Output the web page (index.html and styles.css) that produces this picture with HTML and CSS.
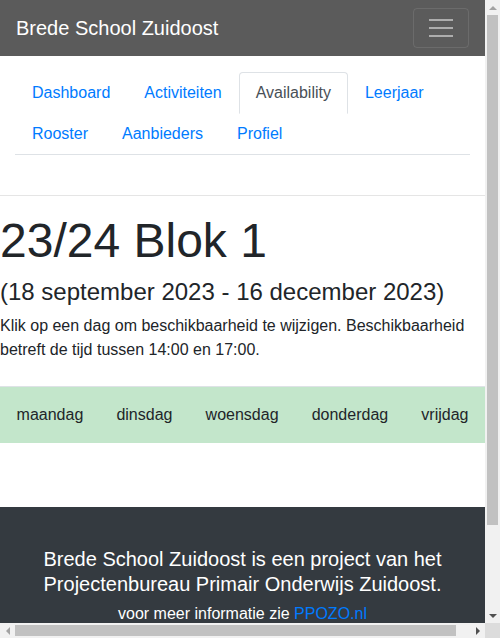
FILE: index.html
```html
<!DOCTYPE html>
<html lang="nl">
<head>
<meta charset="utf-8">
<title>Availability - Brede School Zuidoost</title>
<link rel="stylesheet" href="styles.css">
</head>
<body>
<div class="window">
  <div class="viewport">
    <nav class="navbar">
      <a class="brand" href="#">Brede School Zuidoost</a>
      <button class="toggler" type="button" aria-label="Menu">
        <span class="bar"></span>
        <span class="bar"></span>
        <span class="bar"></span>
      </button>
    </nav>

    <div class="tabs-wrap">
      <ul class="tabs">
        <li class="tab-item"><a class="tab" href="#">Dashboard</a></li>
        <li class="tab-item"><a class="tab" href="#">Activiteiten</a></li>
        <li class="tab-item"><a class="tab active" href="#">Availability</a></li>
        <li class="tab-item"><a class="tab" href="#">Leerjaar</a></li>
        <li class="tab-item"><a class="tab" href="#">Rooster</a></li>
        <li class="tab-item"><a class="tab" href="#">Aanbieders</a></li>
        <li class="tab-item"><a class="tab" href="#">Profiel</a></li>
      </ul>
    </div>

    <main class="page-row">
      <hr class="divider">
      <h1 class="title">23/24 Blok 1</h1>
      <h4 class="period">(18 september 2023 - 16 december 2023)</h4>
      <p class="intro">Klik op een dag om beschikbaarheid te wijzigen. Beschikbaarheid betreft de tijd tussen 14:00 en 17:00.</p>
      <div class="days">
        <span class="day">maandag</span>
        <span class="day">dinsdag</span>
        <span class="day">woensdag</span>
        <span class="day">donderdag</span>
        <span class="day">vrijdag</span>
      </div>
    </main>

    <footer class="footer">
      <h5 class="footer-title">Brede School Zuidoost is een project van het Projectenbureau Primair Onderwijs Zuidoost.</h5>
      <p class="footer-info">voor meer informatie zie <a class="footer-link" href="#">PPOZO.nl</a></p>
    </footer>
  </div>

  <div class="vscroll" aria-hidden="true">
    <span class="sb-btn"><span class="arrow arrow-up"></span></span>
    <span class="vtrack"><span class="vthumb"></span></span>
    <span class="sb-btn"><span class="arrow arrow-down"></span></span>
  </div>
  <div class="hscroll" aria-hidden="true">
    <span class="sb-btn"><span class="arrow arrow-left"></span></span>
    <span class="htrack"><span class="hthumb"></span></span>
    <span class="sb-btn"><span class="arrow arrow-right"></span></span>
  </div>
  <div class="corner"></div>
</div>
</body>
</html>
```

FILE: styles.css
```css
html, body {
  margin: 0;
  padding: 0;
  overflow: hidden;
}

body {
  font-family: "Liberation Sans", Arial, sans-serif;
  font-size: 16px;
  line-height: 24px;
  color: #212529;
  background: #fff;
}

a {
  text-decoration: none;
}

/* Browser frame with scrollbars */
.window {
  display: grid;
  grid-template-columns: 485px 15px;
  grid-template-rows: 623px 15px;
  width: 500px;
  height: 638px;
}

.viewport {
  overflow: hidden;
  background: #fff;
}

.vscroll {
  display: flex;
  flex-direction: column;
  background: #f1f1f1;
}

.hscroll {
  display: flex;
  background: #f1f1f1;
}

.corner {
  background: #dcdcdc;
}

.sb-btn {
  flex: 0 0 15px;
  width: 15px;
  height: 15px;
  display: flex;
  align-items: center;
  justify-content: center;
}

.vtrack {
  flex: 1;
  display: flex;
  flex-direction: column;
  padding: 0 2px;
}

.vthumb {
  height: 510px;
  background: #c1c1c1;
}

.htrack {
  flex: 1;
  display: flex;
  padding: 2px 0;
}

.hthumb {
  width: 441px;
  background: #c1c1c1;
}

.arrow {
  width: 0;
  height: 0;
  border-style: solid;
}

.arrow-up {
  border-width: 0 4px 4px 4px;
  border-color: transparent transparent #a3a3a3 transparent;
}

.arrow-down {
  border-width: 4px 4px 0 4px;
  border-color: #505050 transparent transparent transparent;
}

.arrow-left {
  border-width: 4px 4px 4px 0;
  border-color: transparent #a3a3a3 transparent transparent;
}

.arrow-right {
  border-width: 4px 0 4px 4px;
  border-color: transparent transparent transparent #505050;
}

/* Navbar */
.navbar {
  display: flex;
  align-items: center;
  justify-content: space-between;
  height: 56px;
  box-sizing: border-box;
  padding: 8px 16px;
  background: #5b5b5b;
}

.brand {
  color: #fff;
  font-size: 20px;
  line-height: 30px;
  padding: 5px 0;
}

.toggler {
  width: 56px;
  height: 40px;
  box-sizing: border-box;
  margin: 0;
  padding: 0;
  background: transparent;
  border: 1px solid rgba(255, 255, 255, 0.1);
  border-radius: 4px;
  display: flex;
  flex-direction: column;
  align-items: center;
  justify-content: center;
  gap: 6px;
}

.bar {
  display: block;
  width: 24px;
  height: 2px;
  background: rgba(255, 255, 255, 0.5);
}

/* Tabs */
.tabs-wrap {
  margin-top: 16px;
  padding: 0 15px;
}

.tabs {
  display: flex;
  flex-wrap: wrap;
  list-style: none;
  margin: 0;
  padding: 0;
  border-bottom: 1px solid #dee2e6;
}

.tab-item {
  margin-bottom: -1px;
}

.tab {
  display: block;
  padding: 8px 16px;
  border: 1px solid transparent;
  border-radius: 4px 4px 0 0;
  color: #007bff;
}

.tab.active {
  color: #495057;
  background: #fff;
  border-color: #dee2e6 #dee2e6 #fff;
}

/* Main */
.page-row {
  display: block;
}

.divider {
  height: 0;
  margin: 40px 0 16px;
  border: 0;
  border-top: 1px solid rgba(0, 0, 0, 0.1);
}

.title {
  margin: 0 0 8px;
  font-size: 48px;
  font-weight: 400;
  line-height: 1.2;
}

.period {
  margin: 0 0 8px;
  font-size: 24px;
  font-weight: 400;
  line-height: 1.2;
}

.intro {
  margin: 0;
}

.days {
  display: flex;
  justify-content: space-around;
  margin: 24px 0 0;
  border-top: 1px solid #dee2e6;
  background: #c3e6cb;
}

.day {
  padding: 16px 0;
  color: #212529;
}

/* Footer */
.footer {
  margin-top: 64px;
  min-height: 220px;
  box-sizing: border-box;
  padding: 40px 15px 16px;
  background: #343a40;
  color: #fff;
  text-align: center;
}

.footer-title {
  margin: 0 0 5px;
  font-size: 20px;
  font-weight: 400;
  line-height: 25px;
}

.footer-info {
  margin: 0;
}

.footer-link {
  color: #007bff;
}
```
